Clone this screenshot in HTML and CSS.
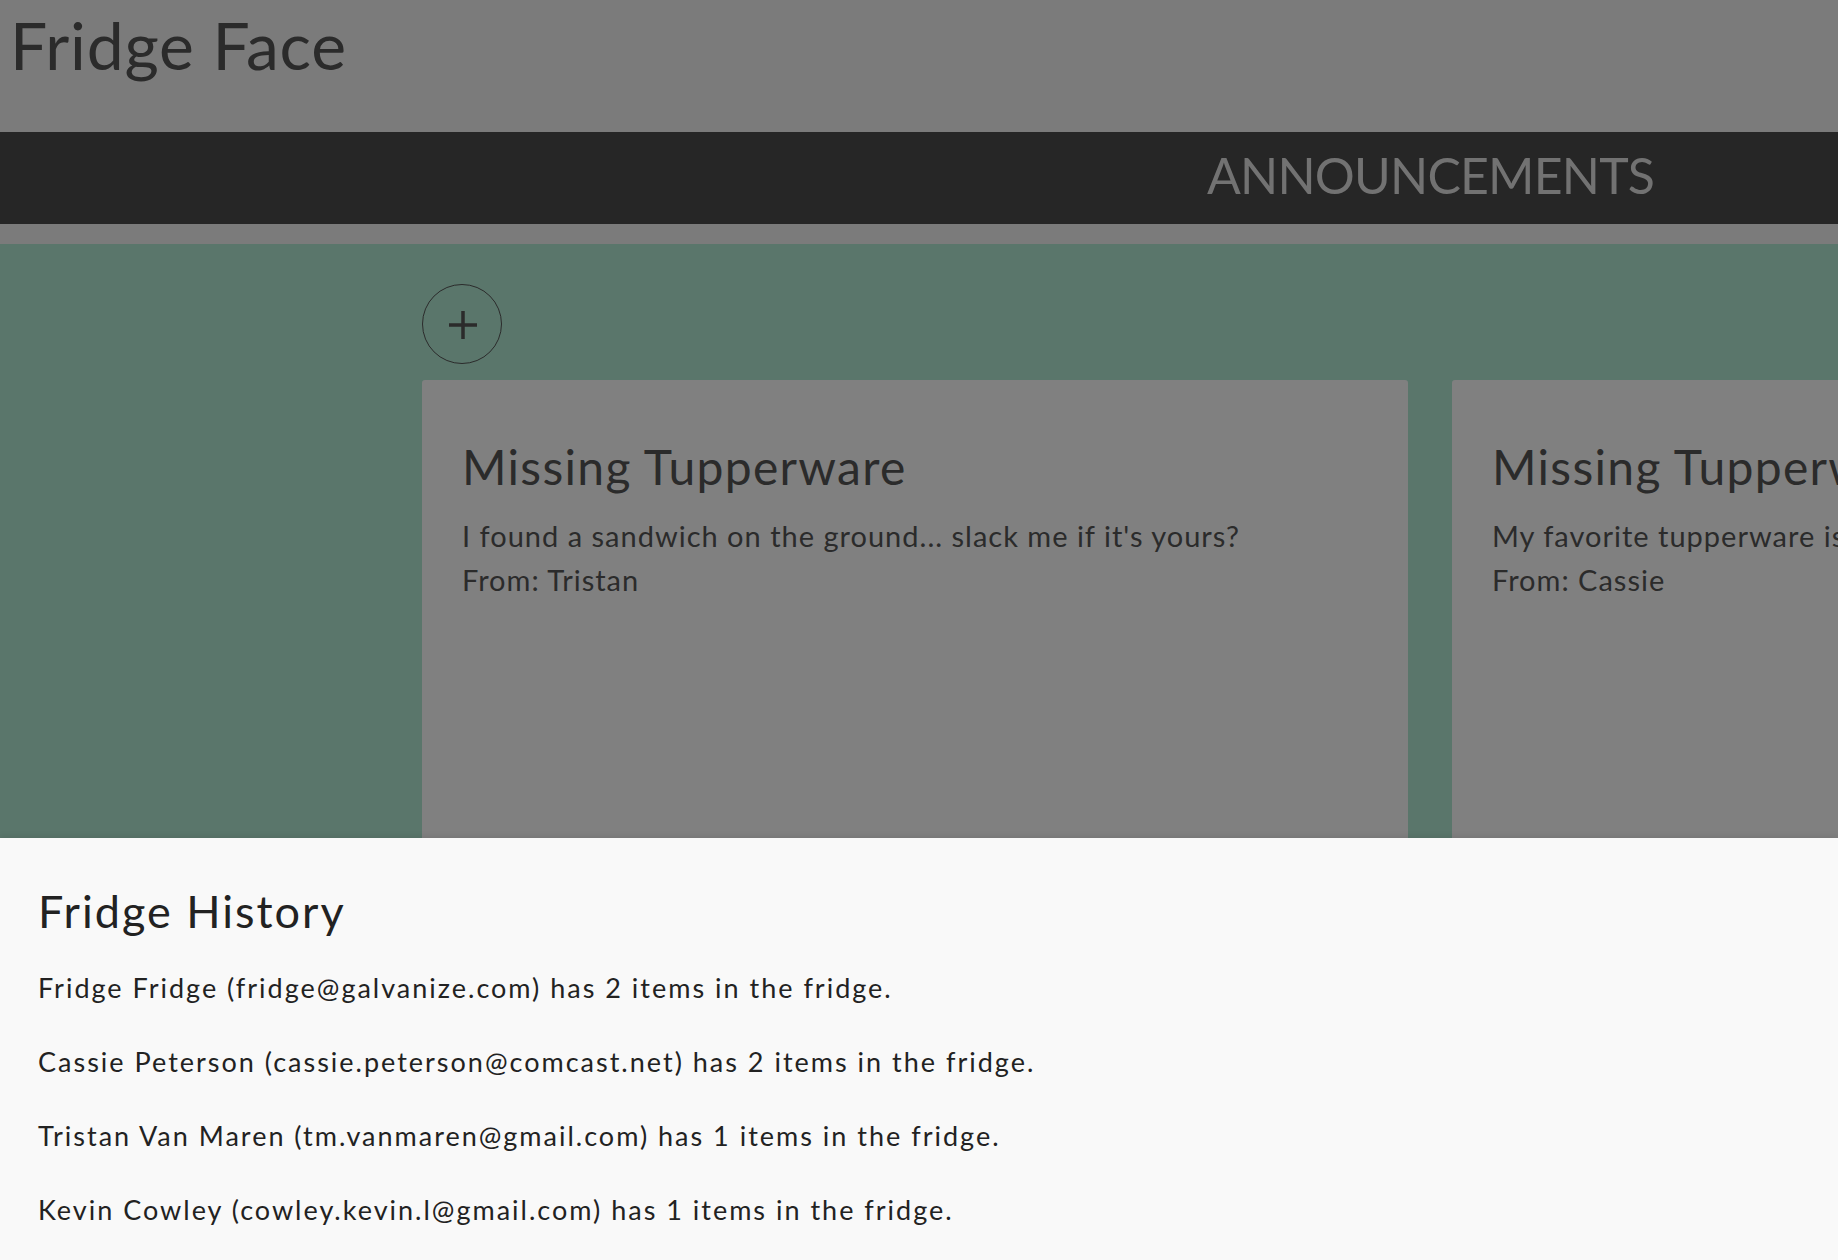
FILE: index.html
```html
<!DOCTYPE html>
<html lang="en">
<head>
<meta charset="utf-8">
<title>Fridge Face</title>
<link rel="stylesheet" href="styles.css">
</head>
<body>
<header class="site-header">
  <h1 class="brand">Fridge Face</h1>
</header>
<nav class="nav-bar">
  <span class="nav-item">ANNOUNCEMENTS</span>
</nav>
<div class="spacer"></div>
<main class="board">
  <button class="add-btn" aria-label="Add announcement">
    <svg width="28" height="28" viewBox="0 0 28 28"><path d="M14 0V28M0 14H28" stroke="#2b2b2b" stroke-width="3.5" fill="none"/></svg>
  </button>
  <div class="cards">
    <article class="card">
      <h2 class="card-title">Missing Tupperware</h2>
      <p class="card-text">I found a sandwich on the ground... slack me if it's yours?</p>
      <p class="card-text">From: Tristan</p>
    </article>
    <article class="card">
      <h2 class="card-title">Missing Tupperware</h2>
      <p class="card-text">My favorite tupperware is missing. Has anyone seen it?</p>
      <p class="card-text">From: Cassie</p>
    </article>
  </div>
</main>
<section class="sheet">
  <h3 class="sheet-title">Fridge History</h3>
  <p class="sheet-line">Fridge Fridge (fridge@galvanize.com) has 2 items in the fridge.</p>
  <p class="sheet-line">Cassie Peterson (cassie.peterson@comcast.net) has 2 items in the fridge.</p>
  <p class="sheet-line">Tristan Van Maren (tm.vanmaren@gmail.com) has 1 items in the fridge.</p>
  <p class="sheet-line">Kevin Cowley (cowley.kevin.l@gmail.com) has 1 items in the fridge.</p>
</section>
</body>
</html>
```
FILE: styles.css
```css
html, body {
  margin: 0;
  padding: 0;
}
body {
  font-family: "Lato", "Open Sans", sans-serif;
  background: #f9f9f9;
  color: #2b2b2b;
  width: 1838px;
  height: 1260px;
  overflow: hidden;
}
.site-header {
  height: 132px;
  background: #7b7b7b;
  box-sizing: border-box;
  padding: 12px 0 0 10px;
}
.brand {
  margin: 0;
  font-size: 66px;
  line-height: 66px;
  font-weight: 400;
  letter-spacing: 0.8px;
  color: #2b2b2b;
}
.nav-bar {
  height: 92px;
  background: #262626;
  box-sizing: border-box;
  padding: 18px 0 0 1207px;
}
.nav-item {
  display: block;
  font-size: 50px;
  line-height: 50px;
  letter-spacing: -0.8px;
  color: #727272;
  font-weight: 400;
}
.spacer {
  height: 20px;
  background: #7b7b7b;
}
.board {
  height: 594px;
  background: #5a766b;
  box-sizing: border-box;
  padding: 40px 0 0 422px;
  overflow: hidden;
}
.add-btn {
  display: flex;
  align-items: center;
  justify-content: center;
  width: 80px;
  height: 80px;
  border-radius: 50%;
  border: 1.5px solid #2b2b2b;
  background: transparent;
  padding: 2px 0 0 2px;
  box-sizing: border-box;
  margin: 0 0 16px 0;
}
.cards {
  display: flex;
  gap: 44px;
  width: 3000px;
}
.card {
  flex: 0 0 986px;
  height: 600px;
  background: #808080;
  border-radius: 3px;
  box-sizing: border-box;
  padding: 57px 40px;
}
.card-title {
  margin: 0 0 17px 0;
  font-size: 48px;
  line-height: 60px;
  font-weight: 400;
  letter-spacing: 1.3px;
  color: #2b2b2b;
}
.card-text {
  margin: 0;
  font-size: 29px;
  line-height: 44px;
  letter-spacing: 1px;
  color: #2b2b2b;
}
.sheet {
  height: 422px;
  background: #f9f9f9;
  box-sizing: border-box;
  padding: 43px 0 0 38px;
  box-shadow: 0 -2px 6px rgba(0,0,0,0.08);
  position: relative;
}
.sheet-title {
  margin: 0 0 30px 0;
  font-size: 45px;
  line-height: 60px;
  font-weight: 400;
  letter-spacing: 2px;
  color: #222;
}
.sheet-line {
  margin: 0 0 40px 0;
  font-size: 27px;
  line-height: 34px;
  letter-spacing: 2px;
  color: #222;
}
```
